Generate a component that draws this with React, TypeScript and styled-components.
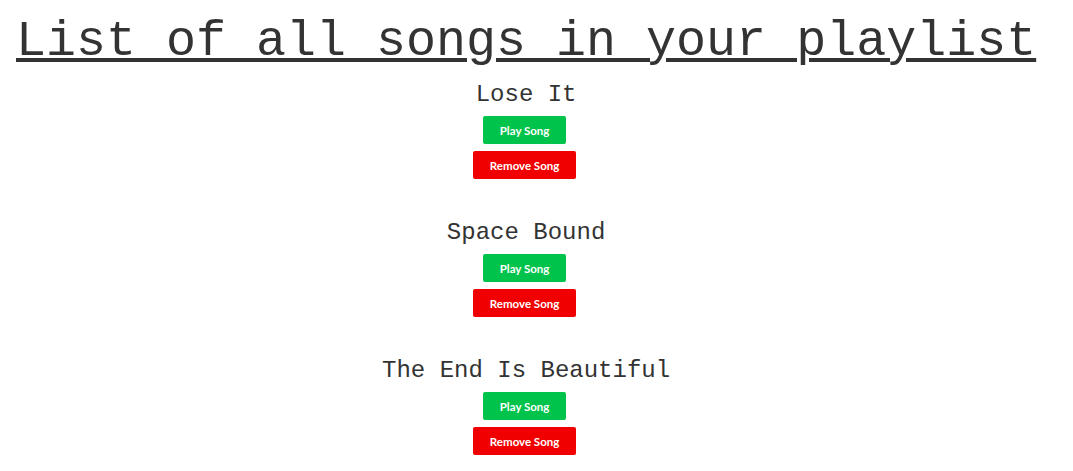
import React from "react";
import styled, { createGlobalStyle } from "styled-components";

const GlobalStyle = createGlobalStyle`
  html, body { margin: 0; padding: 0; background: #ffffff; }
  body { font-family: "Liberation Mono", "Courier New", monospace; color: #333333; }
`;

const Page = styled.main`
  display: inline-flex;
  flex-direction: column;
  align-items: center;
  padding: 13px 0 0 16px;
`;

const Heading = styled.h1`
  margin: 0;
  font-family: "Liberation Mono", "Courier New", monospace;
  font-weight: 400;
  font-size: 50px;
  line-height: 57px;
  color: #333333;
  text-decoration: underline;
  text-decoration-thickness: 4px;
  text-underline-offset: 3px;
  white-space: nowrap;
`;

const SongList = styled.ul`
  list-style: none;
  margin: 11px 0 0;
  padding: 0;
  display: flex;
  flex-direction: column;
  align-items: center;
  gap: 40px;
`;

const SongItem = styled.li`
  display: flex;
  flex-direction: column;
  align-items: center;
`;

const SongTitle = styled.h3`
  margin: 0 0 8px;
  font-family: "Liberation Mono", "Courier New", monospace;
  font-weight: 400;
  font-size: 24px;
  line-height: 27px;
  color: #333333;
  white-space: nowrap;
`;

const ActionButton = styled.button<{ $variant: "play" | "remove" }>`
  height: 28px;
  padding: 0 17px;
  margin-right: 3px;
  border: none;
  border-radius: 2px;
  background: ${(p) => (p.$variant === "play" ? "#00c34b" : "#f00000")};
  color: #ffffff;
  font-family: Lato, "Open Sans", sans-serif;
  font-weight: 700;
  font-size: 11.5px;
  cursor: pointer;
  & + & {
    margin-top: 7px;
  }
`;

const songs = ["Lose It", "Space Bound", "The End Is Beautiful"];

export default function App() {
  return (
    <>
      <GlobalStyle />
      <Page>
        <Heading>List of all songs in your playlist</Heading>
        <SongList>
          {songs.map((s) => (
            <SongItem key={s}>
              <SongTitle>{s}</SongTitle>
              <ActionButton $variant="play">Play Song</ActionButton>
              <ActionButton $variant="remove">Remove Song</ActionButton>
            </SongItem>
          ))}
        </SongList>
      </Page>
    </>
  );
}
